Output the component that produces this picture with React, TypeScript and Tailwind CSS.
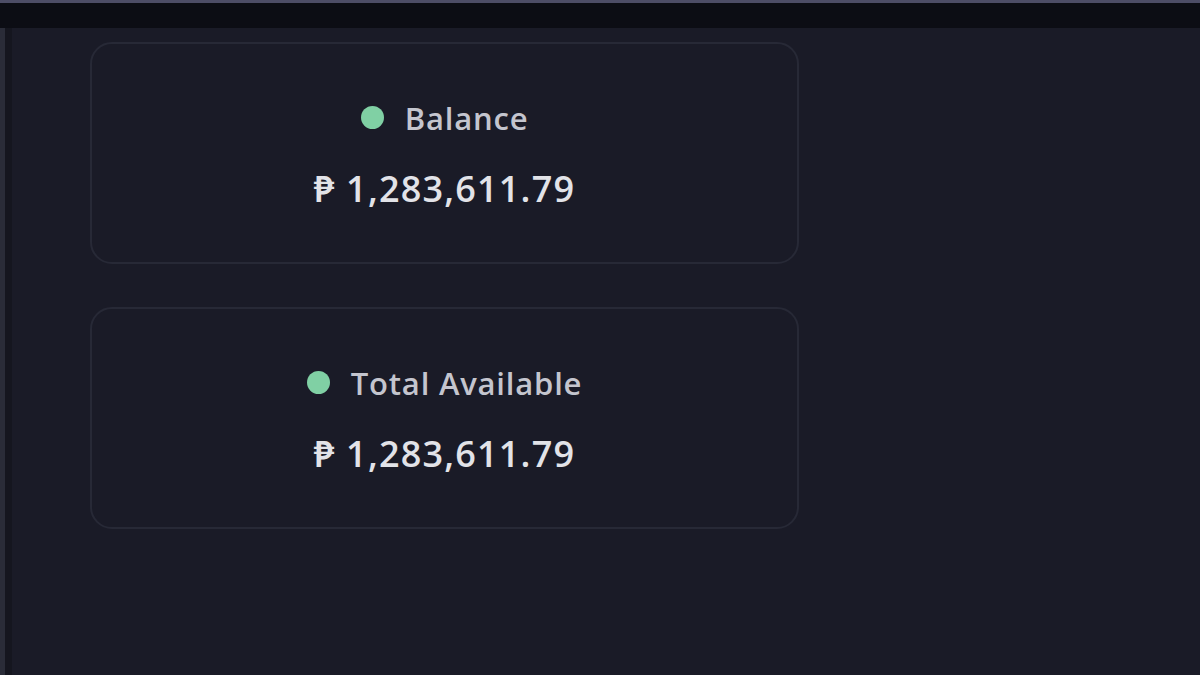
import React from "react";

type Stat = { label: string; amount: string };

const STATS: Stat[] = [
  { label: "Balance", amount: "₱ 1,283,611.79" },
  { label: "Total Available", amount: "₱ 1,283,611.79" },
];

const StatCard = ({ stat }: { stat: Stat }) => (
  <div className="h-[222px] w-[709px] pt-[4px] rounded-[22px] border-2 border-[#272936] flex flex-col items-center justify-center gap-[31px]">
    <div className="flex items-center gap-[21px]">
      <span className="w-[23px] h-[23px] rounded-full bg-[#80d0a4]" />
      <span className="text-[31px] leading-[36px] font-semibold tracking-[0.8px] text-[#c4c5ce]">
        {stat.label}
      </span>
    </div>
    <div className="text-[36px] leading-[44px] font-semibold tracking-[1.2px] text-[#e2e3e8]">
      {stat.amount}
    </div>
  </div>
);

export default function App() {
  return (
    <div
      className="w-[1200px] h-[675px] bg-[#1a1b27] flex flex-col overflow-hidden"
      style={{ fontFamily: '"Open Sans", "Noto Sans", sans-serif' }}
    >
      <div className="h-[3px] bg-[#4d4d66]" />
      <div className="h-[25px] bg-[#0c0d14]" />
      <div className="flex-1 flex">
        <div className="w-[5px] bg-[#2a2c38]" />
        <div className="w-[7px] bg-[#15161f]" />
        <div className="flex-1 pl-[78px] pt-[14px] flex flex-col gap-[43px]">
          {STATS.map((s) => (
            <StatCard key={s.label} stat={s} />
          ))}
        </div>
      </div>
    </div>
  );
}
